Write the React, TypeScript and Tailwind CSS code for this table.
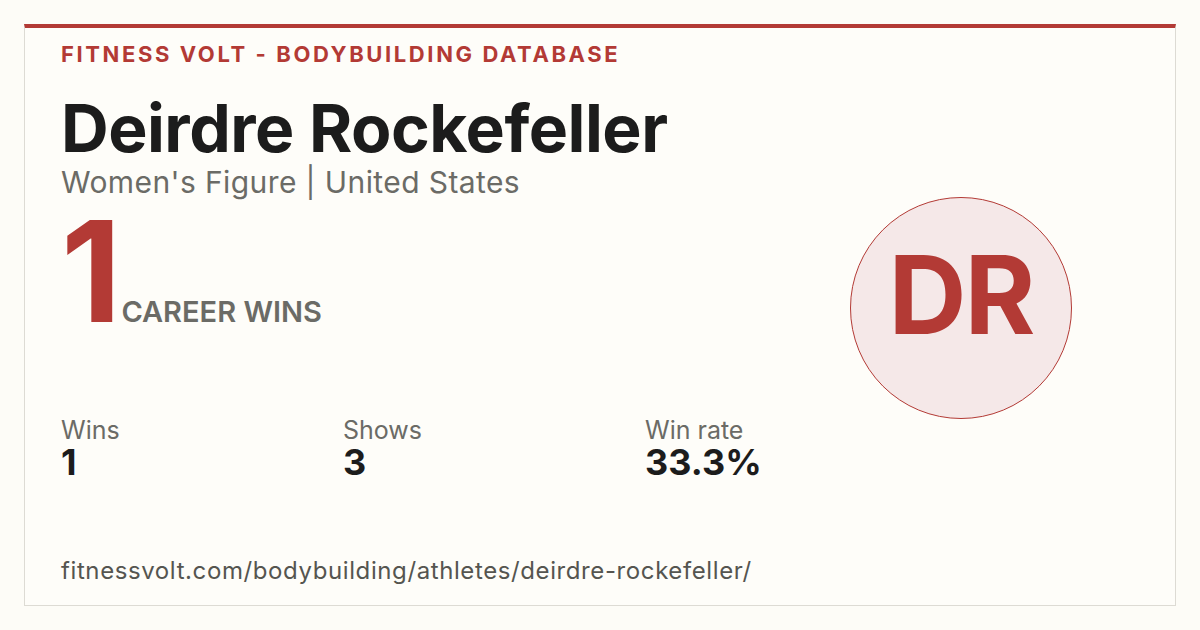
export default function App() {
  const stats = [
    { label: 'Wins', value: '1', w: 'w-[282px]' },
    { label: 'Shows', value: '3', w: 'w-[302px]' },
    { label: 'Win rate', value: '33.3%', w: '' },
  ]

  return (
    <div
      className="w-[1200px] h-[630px] bg-[#fdfcf7] p-6"
      style={{ fontFamily: 'Inter, "Noto Sans", sans-serif' }}
    >
      <div className="h-full border border-[#dddbd4] border-t-4 border-t-[#b33a35] bg-[#fefdf9] px-9 pt-3 flex flex-col">
        <div className="text-[22px] font-bold tracking-[2.6px] text-[#b33a35] leading-7">
          FITNESS VOLT - BODYBUILDING DATABASE
        </div>

        <div className="flex items-start">
          <div className="flex-1 min-w-0">
            <h1 className="mt-6 text-[66px] font-bold text-[#1c1c1c] leading-[72px] tracking-[-0.5px]">
              Deirdre Rockefeller
            </h1>
            <p className="text-[30px] text-[#6b6b66] leading-9 tracking-[0.4px]">Women's Figure | United States</p>

            <div className="flex items-baseline mt-[11px] h-[120px]">
              <span className="text-[140px] font-bold text-[#b33a35] leading-[120px] tracking-[-4px]">1</span>
              <span className="ml-1 mt-1 text-[29px] font-semibold text-[#6b6b66] leading-8">CAREER WINS</span>
            </div>

            <div className="flex mt-[85px]">
              {stats.map((s) => (
                <div key={s.label} className={s.w}>
                  <div className="text-[25px] text-[#6b6b66] leading-7">{s.label}</div>
                  <div className="text-[36px] font-bold text-[#1c1c1c] leading-9">{s.value}</div>
                </div>
              ))}
            </div>
          </div>

          <div className="w-[222px] mr-[67px] mt-[129px] shrink-0">
            <div className="w-[222px] h-[222px] rounded-full bg-[#f5e8e8] border-[1.5px] border-[#b33a35] flex items-center justify-center pb-[27px]">
              <span className="text-[108px] font-bold text-[#b33a35] tracking-[-2px] leading-none">DR</span>
            </div>
          </div>
        </div>

        <div className="mt-auto mb-5 text-[24px] text-[#555550] leading-7 tracking-[0.6px]">
          fitnessvolt.com/bodybuilding/athletes/deirdre-rockefeller/
        </div>
      </div>
    </div>
  )
}
